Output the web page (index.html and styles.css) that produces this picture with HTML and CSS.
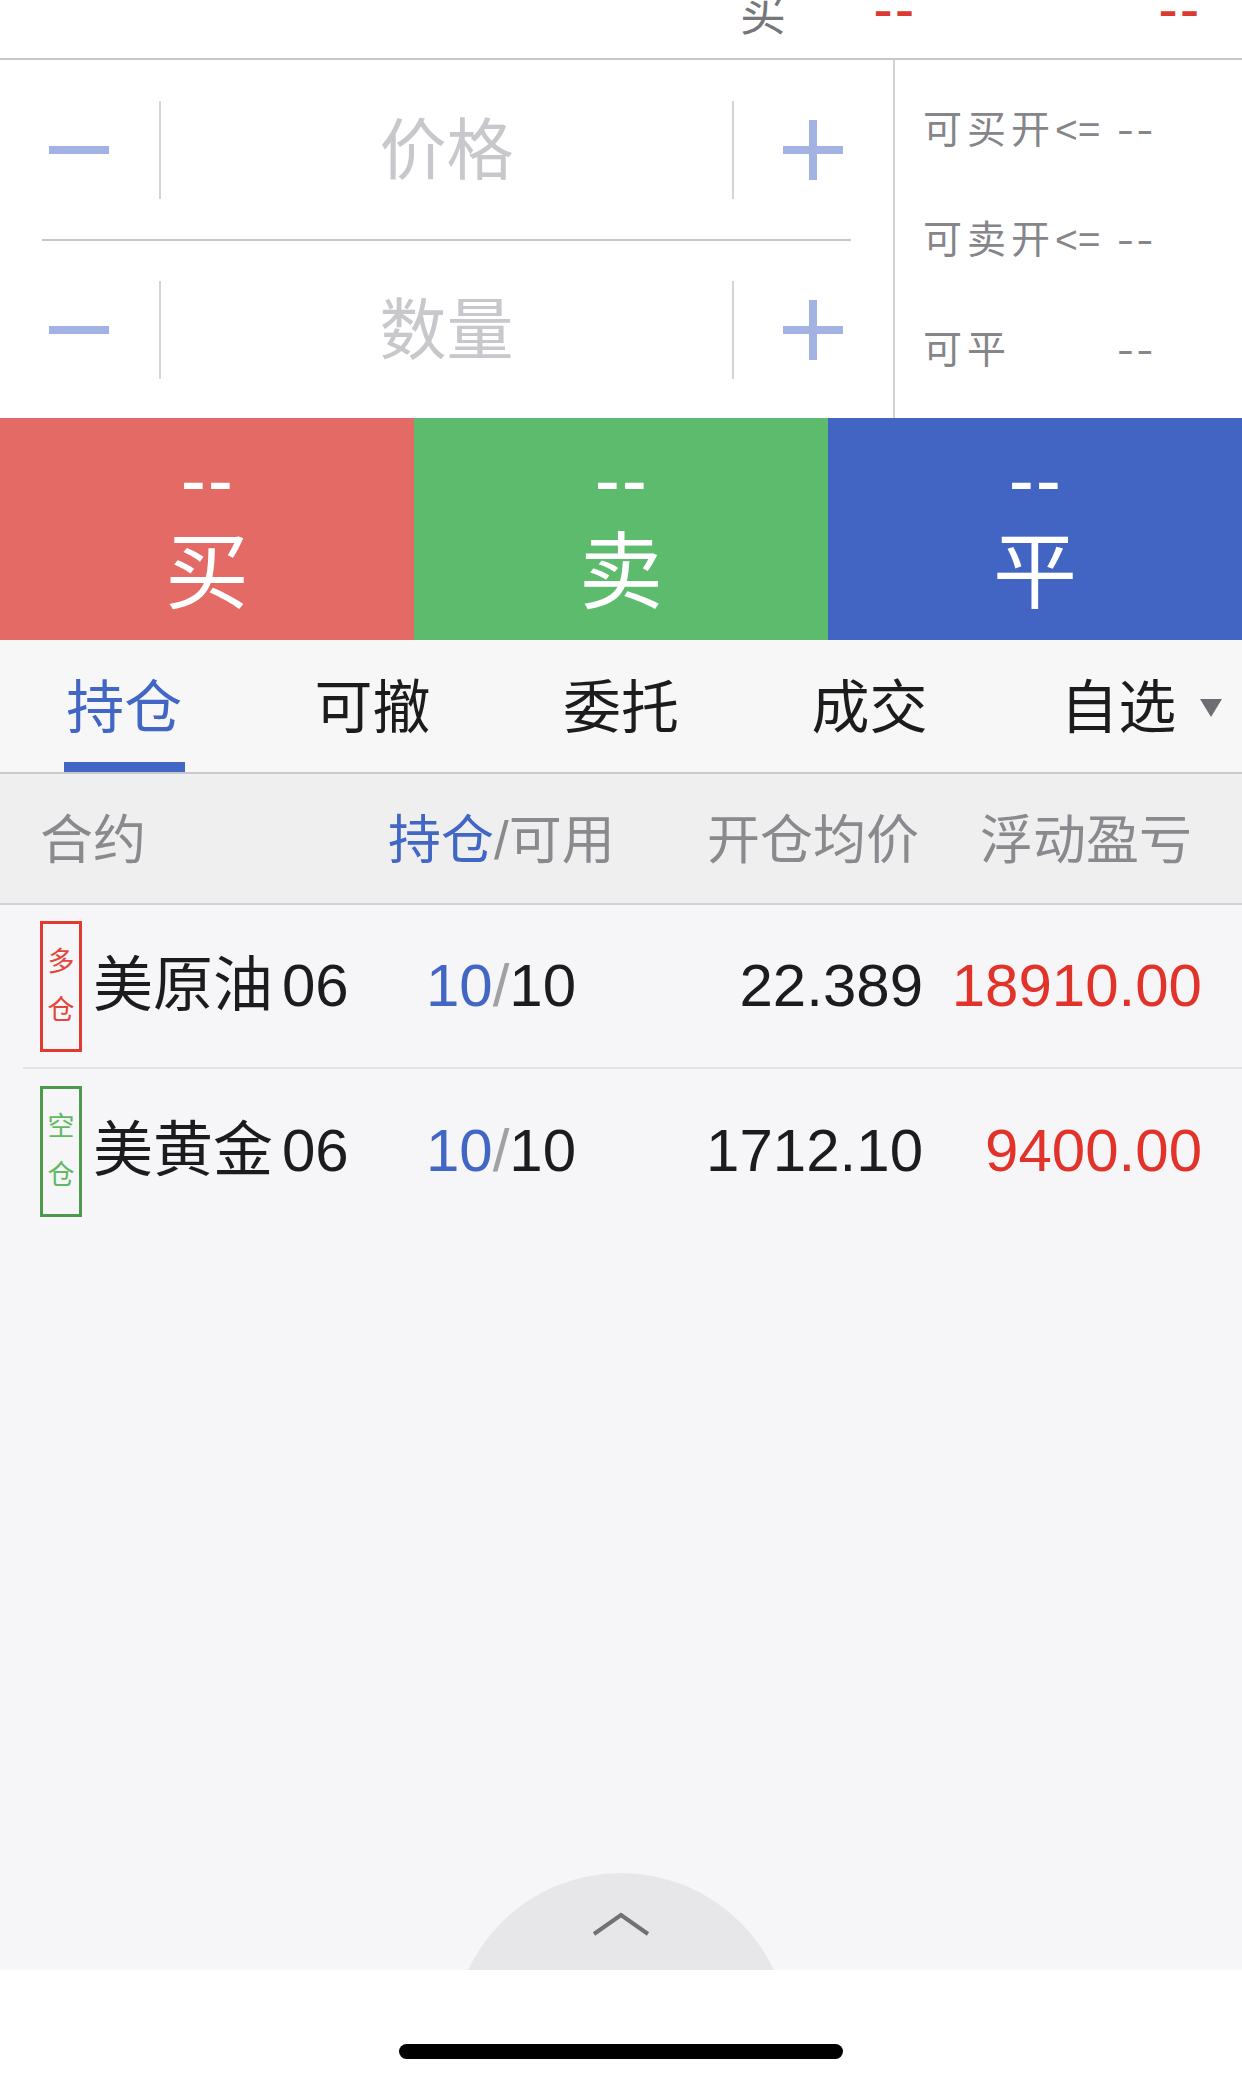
FILE: index.html
```html
<!DOCTYPE html>
<html lang="zh-CN">

<head>
  <meta charset="UTF-8">
  <meta name="viewport" content="width=device-width, initial-scale=1.0">
  <title>交易</title>
  <link rel="stylesheet" href="styles.css">
</head>

<body>
  <!-- 盘口，上面被滚走了一半 -->
  <div class="quote-strip">
    <div class="quote-row">
      <span class="quote-label">买</span>
      <span class="quote-price"><span class="dash">--</span></span>
      <span class="quote-vol"><span class="dash">--</span></span>
    </div>
  </div>

  <!-- 下单输入 -->
  <div class="order-panel">
    <div class="inputs">
      <div class="input-row">
        <span class="step step-minus">
          <svg width="60" height="60" viewBox="0 0 60 60"><path d="M0 30H60" /></svg>
        </span>
        <div class="field">价格</div>
        <span class="step step-plus">
          <svg width="60" height="60" viewBox="0 0 60 60"><path d="M0 30H60M30 0V60" /></svg>
        </span>
      </div>
      <div class="input-row">
        <span class="step step-minus">
          <svg width="60" height="60" viewBox="0 0 60 60"><path d="M0 30H60" /></svg>
        </span>
        <div class="field">数量</div>
        <span class="step step-plus">
          <svg width="60" height="60" viewBox="0 0 60 60"><path d="M0 30H60M30 0V60" /></svg>
        </span>
      </div>
    </div>

    <div class="limits">
      <div class="limit-row"><span class="limit-label">可买开<span class="op">&lt;=</span></span><span class="dash">--</span></div>
      <div class="limit-row"><span class="limit-label">可卖开<span class="op">&lt;=</span></span><span class="dash">--</span></div>
      <div class="limit-row"><span class="limit-label">可平</span><span class="dash">--</span></div>
    </div>
  </div>

  <!-- 买 / 卖 / 平 -->
  <div class="actions">
    <div class="action action-buy"><span class="action-price dash">--</span><span class="action-name">买</span></div>
    <div class="action action-sell"><span class="action-price dash">--</span><span class="action-name">卖</span></div>
    <div class="action action-close"><span class="action-price dash">--</span><span class="action-name">平</span></div>
  </div>

  <div class="tabs">
    <div class="tab active"><span class="tab-label">持仓</span><span class="ink-bar"></span></div>
    <div class="tab"><span class="tab-label">可撤</span><span class="ink-bar"></span></div>
    <div class="tab"><span class="tab-label">委托</span><span class="ink-bar"></span></div>
    <div class="tab"><span class="tab-label">成交</span><span class="ink-bar"></span></div>
    <div class="tab"><span class="tab-label">自选<span class="caret"></span></span><span class="ink-bar"></span></div>
  </div>

  <div class="thead">
    <span class="col-name">合约</span>
    <span class="col-pos"><span class="hl">持仓</span>/可用</span>
    <span class="col-avg">开仓均价</span>
    <span class="col-pnl">浮动盈亏</span>
  </div>

  <div class="tbody">
    <div class="pos-list">
      <div class="pos-row">
        <div class="col-name">
          <span class="side-tag long"><span>多</span><span>仓</span></span>
          <span class="contract">美原油<span class="month">06</span></span>
        </div>
        <div class="col-pos"><span class="hl">10</span><span class="slash">/</span>10</div>
        <div class="col-avg">22.389</div>
        <div class="col-pnl up">18910.00</div>
      </div>
      <div class="pos-row">
        <div class="col-name">
          <span class="side-tag short"><span>空</span><span>仓</span></span>
          <span class="contract">美黄金<span class="month">06</span></span>
        </div>
        <div class="col-pos"><span class="hl">10</span><span class="slash">/</span>10</div>
        <div class="col-avg">1712.10</div>
        <div class="col-pnl up">9400.00</div>
      </div>
    </div>

    <!-- 上拉把手 -->
    <div class="pull-handle">
      <svg width="60" height="26" viewBox="0 0 60 26"><polyline points="3,23 30,4 57,23" /></svg>
    </div>
  </div>

  <div class="home-bar"><span class="home-indicator"></span></div>
</body>

</html>
```

FILE: styles.css
```css
* {
  box-sizing: border-box;
}

body {
  margin: 0;
  width: 1242px;
  height: 2082px;
  display: flex;
  flex-direction: column;
  overflow: hidden;
  background-color: #f6f6f8;
  font-family: "Liberation Sans", "Noto Sans CJK SC", sans-serif;
  line-height: 1.2;
  color: #1c1c1e;
}

/* the "--" placeholders are wider than a plain hyphen */
.dash {
  display: inline-block;
  letter-spacing: 2px;
  transform: scaleX(1.4);
  white-space: nowrap;
}

/* quote strip at the very top */
.quote-strip {
  height: 60px;
  flex-shrink: 0;
  background-color: #fff;
  border-bottom: 2px solid #c8c8cc;
  overflow: hidden;
}

.quote-row {
  display: flex;
  justify-content: flex-end;
  align-items: flex-start;
  margin-top: -9px;
  padding-right: 40px;
  line-height: 46px;
}

.quote-label {
  width: 47px;
  font-size: 46px;
  color: #77777b;
}

.quote-price,
.quote-vol {
  margin-top: -4px;
  text-align: right;
  font-size: 40px;
  font-weight: bold;
  color: #db3a30;
}

.quote-price .dash,
.quote-vol .dash {
  transform-origin: right center;
}

.quote-price {
  width: 130px;
}

.quote-vol {
  width: 285px;
}

/* order inputs */
.order-panel {
  height: 358px;
  flex-shrink: 0;
  display: flex;
  background-color: #fff;
}

.inputs {
  width: 895px;
  padding: 0 42px;
  border-right: 2px solid #d1d1d6;
}

.input-row {
  height: 179px;
  display: flex;
  align-items: center;
}

.input-row + .input-row {
  border-top: 2px solid #c6c6cb;
}

.step {
  display: flex;
}

.step svg path {
  stroke: #a1b2e3;
  stroke-width: 8;
  fill: none;
}

.step-minus {
  margin-left: 7px;
}

.step-plus {
  margin-left: 49px;
  margin-right: 8px;
}

.field {
  flex: 1;
  height: 98px;
  margin-left: 50px;
  padding-top: 3px;
  display: flex;
  align-items: center;
  justify-content: center;
  border-left: 2px solid #d4d4d8;
  border-right: 2px solid #d4d4d8;
  font-size: 67px;
  color: #c7c7cc;
}

.limits {
  flex: 1;
  padding: 15px 0 0 28px;
}

.limit-row {
  height: 110px;
  display: flex;
  align-items: center;
  font-size: 39px;
  color: #85858a;
}

.limit-label {
  width: 194px;
  letter-spacing: 5px;
}

.limit-label .op {
  letter-spacing: 0;
}

.limit-row .dash {
  font-size: 36px;
  transform-origin: left center;
}

/* buy / sell / close buttons */
.actions {
  height: 222px;
  flex-shrink: 0;
  display: flex;
}

.action {
  flex: 1;
  display: flex;
  flex-direction: column;
  align-items: center;
  padding-top: 43px;
  color: #fff;
}

.action-buy {
  background-color: #e46a65;
}

.action-sell {
  background-color: #5dbb6d;
}

.action-close {
  background-color: #4265c3;
}

.action-price {
  font-size: 52px;
  font-weight: bold;
  line-height: 40px;
  margin-right: -2px;
}

.action-name {
  margin-top: 22px;
  font-size: 84px;
  line-height: 100px;
}

/* tabs */
.tabs {
  height: 134px;
  flex-shrink: 0;
  display: flex;
  background-color: #f7f7f7;
  border-bottom: 2px solid #c9c9ce;
}

.tab {
  flex: 1;
  display: flex;
  flex-direction: column;
  align-items: center;
}

.tab-label {
  flex: 1;
  display: flex;
  align-items: center;
  padding-top: 14px;
  font-size: 58px;
  color: #1c1c1e;
}

.tab.active .tab-label {
  color: #4166c4;
}

.ink-bar {
  width: 121px;
  height: 10px;
}

.tab.active .ink-bar {
  background-color: #4166c4;
}

.caret {
  width: 0;
  height: 0;
  margin-left: 24px;
  margin-right: -47px;
  border-left: 11.5px solid transparent;
  border-right: 11.5px solid transparent;
  border-top: 18px solid #6d6d72;
}

/* position table */
.thead,
.pos-row {
  display: grid;
  grid-template-columns: 348px 226px 309px 279px;
  align-items: center;
  white-space: nowrap;
}

.thead {
  height: 131px;
  flex-shrink: 0;
  padding: 5px 40px 0 40px;
  background-color: #efeff0;
  border-bottom: 2px solid #d1d1d6;
  font-size: 53px;
  color: #8a8a8e;
}

.col-pos {
  text-align: center;
}

.col-avg,
.col-pnl {
  text-align: right;
}

.thead .col-avg {
  padding-right: 4px;
}

.thead .col-pnl {
  padding-right: 10px;
}

.hl {
  color: #4166c4;
}

.tbody {
  flex: 1;
  position: relative;
  overflow: hidden;
}

.pos-row {
  height: 164px;
  margin-left: 23px;
  padding: 0 40px 0 17px;
  border-bottom: 2px solid #e4e4e8;
  font-size: 60px;
}

.pos-row:last-child {
  border-bottom: none;
}

.pos-row .col-name {
  display: flex;
  align-items: center;
}

.side-tag {
  width: 42px;
  height: 131px;
  display: flex;
  flex-direction: column;
  justify-content: center;
  align-items: center;
  border: 3px solid;
  font-size: 27px;
  line-height: 48px;
}

.side-tag.long {
  border-color: #df3b31;
  color: #e2463c;
}

.side-tag.short {
  border-color: #4c9a4a;
  color: #5fba62;
}

.contract {
  margin-left: 11px;
}

.contract .month {
  margin-left: 9px;
}

.slash {
  color: #a0a0a5;
}

.up {
  color: #e2332b;
}

.pull-handle {
  position: absolute;
  left: calc(50% - 169px);
  bottom: -241px;
  width: 338px;
  height: 338px;
  border-radius: 50%;
  background-color: #e7e7ea;
  padding-top: 38px;
}

.pull-handle svg {
  display: block;
  margin: 0 auto;
}

.pull-handle polyline {
  fill: none;
  stroke: #707075;
  stroke-width: 4;
}

.home-bar {
  height: 112px;
  flex-shrink: 0;
  background-color: #fff;
  padding-top: 74px;
}

.home-indicator {
  display: block;
  width: 444px;
  height: 15px;
  margin: 0 auto;
  border-radius: 8px;
  background-color: #000;
}
```
